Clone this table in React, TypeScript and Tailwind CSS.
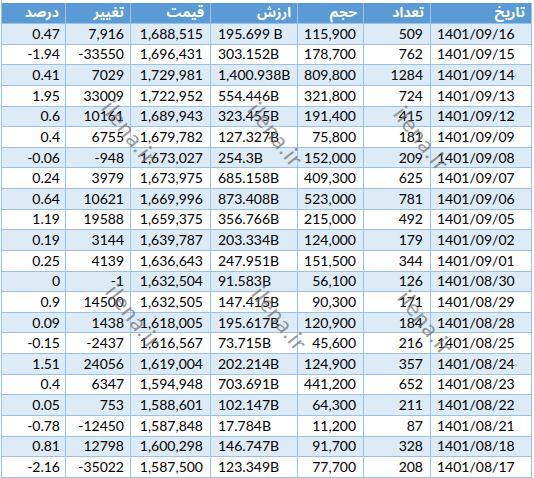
import React from "react";

type Row = [string, string, string, string, string, string, string];

const rows: Row[] = [
  ["0.47", "7,916", "1,688,515", "195.699 B", "115,900", "509", "1401/09/16"],
  ["-1.94", "-33550", "1,696,431", "303.152B", "178,700", "762", "1401/09/15"],
  ["0.41", "7029", "1,729,981", "1,400.938B", "809,800", "1284", "1401/09/14"],
  ["1.95", "33009", "1,722,952", "554.446B", "321,800", "724", "1401/09/13"],
  ["0.6", "10161", "1,689,943", "323.455B", "191,400", "415", "1401/09/12"],
  ["0.4", "6755", "1,679,782", "127.327B", "75,800", "181", "1401/09/09"],
  ["-0.06", "-948", "1,673,027", "254.3B", "152,000", "209", "1401/09/08"],
  ["0.24", "3979", "1,673,975", "685.158B", "409,300", "625", "1401/09/07"],
  ["0.64", "10621", "1,669,996", "873.408B", "523,000", "781", "1401/09/06"],
  ["1.19", "19588", "1,659,375", "356.766B", "215,000", "492", "1401/09/05"],
  ["0.19", "3144", "1,639,787", "203.334B", "124,000", "179", "1401/09/02"],
  ["0.25", "4139", "1,636,643", "247.951B", "151,500", "344", "1401/09/01"],
  ["0", "-1", "1,632,504", "91.583B", "56,100", "126", "1401/08/30"],
  ["0.9", "14500", "1,632,505", "147.415B", "90,300", "171", "1401/08/29"],
  ["0.09", "1438", "1,618,005", "195.617B", "120,900", "184", "1401/08/28"],
  ["-0.15", "-2437", "1,616,567", "73.715B", "45,600", "216", "1401/08/25"],
  ["1.51", "24056", "1,619,004", "202.214B", "124,900", "357", "1401/08/24"],
  ["0.4", "6347", "1,594,948", "703.691B", "441,200", "652", "1401/08/23"],
  ["0.05", "753", "1,588,601", "102.147B", "64,300", "211", "1401/08/22"],
  ["-0.78", "-12450", "1,587,848", "17.784B", "11,200", "87", "1401/08/21"],
  ["0.81", "12798", "1,600,298", "146.747B", "91,700", "328", "1401/08/18"],
  ["-2.16", "-35022", "1,587,500", "123.349B", "77,700", "208", "1401/08/17"],
];

const headers = ["درصد", "تغییر", "قیمت", "ارزش", "حجم", "تعداد", "تاریخ"];

const widths = ["w-[64px]", "w-[65px]", "w-[80px]", "w-[87px]", "w-[66px]", "w-[67px]", "w-[101px]"];
const align = ["justify-end pr-[5px]", "justify-end pr-[6px]", "justify-end pr-[7px]", "justify-start pl-[7px]", "justify-end pr-[7px]", "justify-end pr-[7px]", "justify-start pl-[6px]"];

const marks: { left: number; top: number }[] = [
  { left: 116, top: 96 },
  { left: 262, top: 98 },
  { left: 408, top: 102 },
  { left: 120, top: 280 },
  { left: 266, top: 282 },
  { left: 412, top: 286 },
];

export default function App() {
  return (
    <div className="relative w-[534px] h-[478px] bg-white overflow-hidden">
      <div className="ml-[1px] pt-[3px] w-[531px] border-l border-[#9bc2e6]">
        <div className="flex h-[21px] bg-[#5b9bd5] border-b border-[#9bc2e6]">
          {headers.map((h, i) => (
            <div
              key={i}
              dir="rtl"
              className={`${widths[i]} shrink-0 flex items-center justify-start pr-[6px] border-r border-[#9bc2e6] text-white font-bold text-[14px] leading-[20px]`}
              style={{ fontFamily: '"Noto Sans Arabic", "DejaVu Sans", sans-serif' }}
            >
              {h}
            </div>
          ))}
        </div>
        {rows.map((r, ri) => (
          <div
            key={ri}
            className={`flex h-[20.64px] border-b border-[#9bc2e6] ${ri % 2 === 0 ? "bg-[#ddebf7]" : "bg-white"}`}
          >
            {r.map((c, ci) => (
              <div
                key={ci}
                className={`${widths[ci]} ${align[ci]} shrink-0 flex items-center border-r border-[#9bc2e6] text-black text-[14px] leading-none font-['Lato',sans-serif] whitespace-nowrap`}
              >
                {c}
              </div>
            ))}
          </div>
        ))}
      </div>
      {marks.map((m, i) => (
        <div
          key={i}
          className="absolute pointer-events-none text-[23px] tracking-[1px] font-['Lato',sans-serif] text-[#6f6f6f]/70 origin-top-left rotate-[52deg] leading-none"
          style={{ left: m.left, top: m.top }}
        >
          ilena.ir
        </div>
      ))}
    </div>
  );
}
